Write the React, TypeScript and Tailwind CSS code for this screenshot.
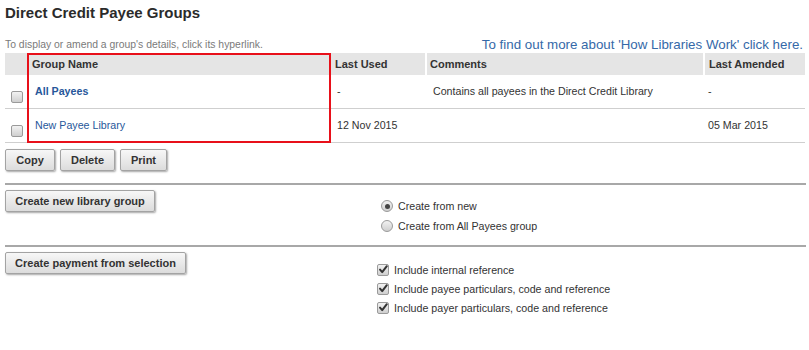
import React from "react";

const btn =
  "h-[22px] whitespace-nowrap rounded-[2px] border border-[#a3a3a3] bg-gradient-to-b from-[#f7f7f7] to-[#dcdcdc] text-[11px] font-bold leading-none text-[#333] shadow-[1px_1px_2px_rgba(0,0,0,0.35)]";

function Box({ checked }: { checked?: boolean }) {
  return (
    <span className="relative inline-block h-[12px] w-[12px] shrink-0 rounded-[2px] border border-[#9a9a9a] bg-gradient-to-b from-[#f2f2f2] to-[#cfcfcf]">
      {checked && (
        <svg viewBox="0 0 12 12" className="absolute left-[0px] top-[-1px] h-[11px] w-[11px]">
          <path d="M2.2 6.2 L4.6 8.8 L9.6 2.4" fill="none" stroke="#333" strokeWidth="2.2" strokeLinecap="round" strokeLinejoin="round" />
        </svg>
      )}
    </span>
  );
}

function Radio({ checked }: { checked?: boolean }) {
  return (
    <span className="flex h-[12px] w-[12px] shrink-0 items-center justify-center rounded-full border border-[#9a9a9a] bg-gradient-to-b from-[#f2f2f2] to-[#cfcfcf]">
      {checked && <span className="h-[5px] w-[5px] rounded-full bg-[#444]" />}
    </span>
  );
}

const rows = [
  { name: "All Payees", bold: true, used: "-", comments: "Contains all payees in the Direct Credit Library", amended: "-" },
  { name: "New Payee Library", bold: false, used: "12 Nov 2015", comments: "", amended: "05 Mar 2015" },
];

const cols = "grid grid-cols-[23px_303px_96px_278px_1fr]";

export default function App() {
  return (
    <div className="h-[350px] w-[809px] bg-white px-[5px] pt-[4px] text-[10.67px] text-[#333] [font-family:'Liberation_Sans',Arial,sans-serif]">
      <h1 className="text-[15px] font-bold leading-[18px] text-[#2b2b2b]">Direct Credit Payee Groups</h1>

      <div className="mt-[15px] flex items-end justify-between pr-[1px]">
        <p className="pb-[2px] text-[10.4px] leading-[12px] text-[#7a7a7a]">To display or amend a group's details, click its hyperlink.</p>
        <a className="text-[13.33px] leading-[16px] text-[#3569a8]">To find out more about 'How Libraries Work' click here.</a>
      </div>

      <div className="relative w-[800px]">
        <div className={`${cols} h-[22px] bg-[#e5e5e5] text-[11px] font-bold leading-[22px] text-[#333]`}>
          <div className="border-r border-white" />
          <div className="border-r-2 border-white pl-[4px]">Group Name</div>
          <div className="border-r-2 border-white pl-[4px]">Last Used</div>
          <div className="border-r-2 border-white pl-[3px]">Comments</div>
          <div className="pl-[4px]">Last Amended</div>
        </div>
        {rows.map((r) => (
          <div key={r.name} className={`${cols} h-[34px] border-b border-[#cfcfcf] leading-[13px]`}>
            <div className="flex items-end justify-center pb-[5px] pl-[1px]">
              <Box />
            </div>
            <div className="flex items-center pl-[7px]">
              <a className={`text-[#27579a] ${r.bold ? "font-bold" : ""}`}>{r.name}</a>
            </div>
            <div className="flex items-center pl-[6px]">{r.used}</div>
            <div className="flex items-center pl-[6px]">{r.comments}</div>
            <div className="flex items-center pl-[3px]">{r.amended}</div>
          </div>
        ))}
        <div className="pointer-events-none absolute left-[22px] top-0 h-[90px] w-[304px] border-2 border-[#e8101a]" />
      </div>

      <div className="mt-[6px] flex gap-[5px]">
        <button className={`${btn} w-[50px]`}>Copy</button>
        <button className={`${btn} w-[55px]`}>Delete</button>
        <button className={`${btn} w-[47px]`}>Print</button>
      </div>

      <div className="mt-[12px] h-[2px] w-[801px] bg-[#a8a8a8]" />
      <div className="flex h-[60px]">
        <div className="w-[372px] pt-[5px]">
          <button className={`${btn} w-[150px]`}>Create new library group</button>
        </div>
        <div className="flex flex-col pt-[11px] pl-[4px]">
          <label className="flex h-[20px] items-center gap-[5px]">
            <Radio checked />
            <span>Create from new</span>
          </label>
          <label className="flex h-[20px] items-center gap-[5px]">
            <Radio />
            <span>Create from All Payees group</span>
          </label>
        </div>
      </div>

      <div className="h-[2px] w-[801px] bg-[#a8a8a8]" />
      <div className="flex">
        <div className="w-[372px] pt-[5px]">
          <button className={`${btn} w-[181px]`}>Create payment from selection</button>
        </div>
        <div className="flex flex-col pt-[13px]">
          <label className="flex h-[19px] items-center gap-[5px]">
            <Box checked />
            <span>Include internal reference</span>
          </label>
          <label className="flex h-[19px] items-center gap-[5px]">
            <Box checked />
            <span>Include payee particulars, code and reference</span>
          </label>
          <label className="flex h-[19px] items-center gap-[5px]">
            <Box checked />
            <span>Include payer particulars, code and reference</span>
          </label>
        </div>
      </div>
    </div>
  );
}
